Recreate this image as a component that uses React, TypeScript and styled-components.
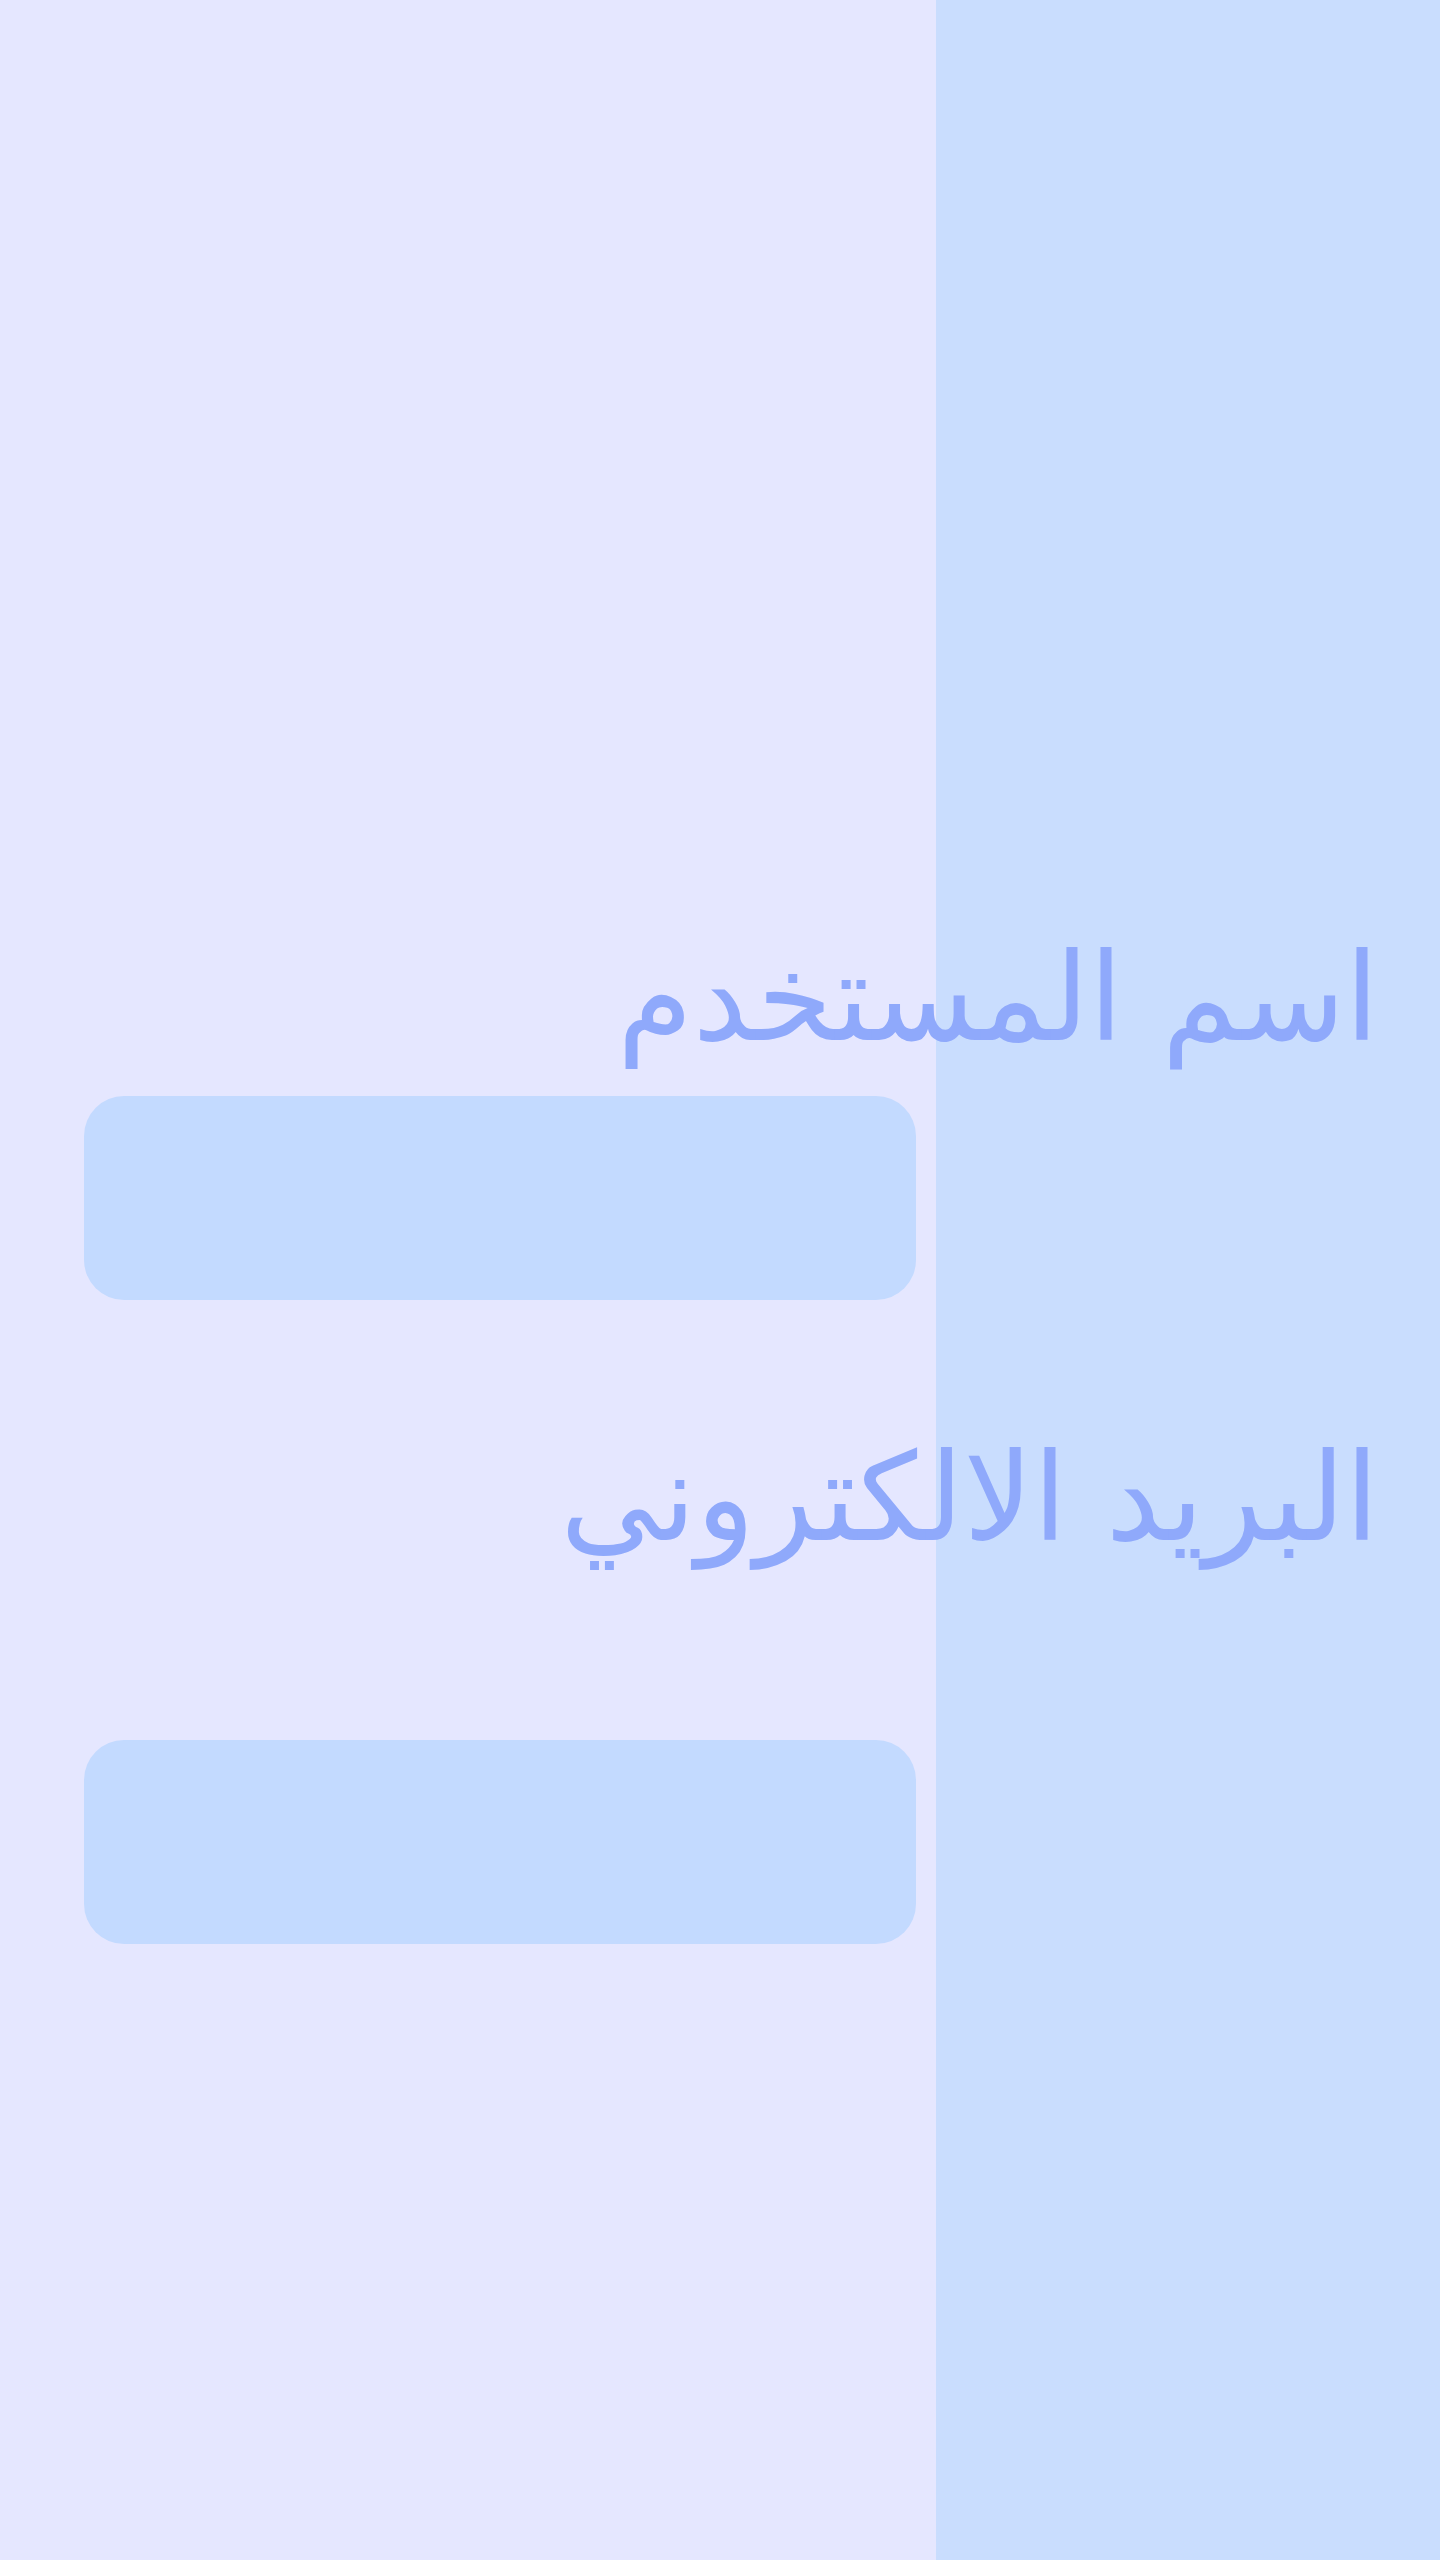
import React from "react";
import styled, { createGlobalStyle } from "styled-components";

const Global = createGlobalStyle`
  html, body { margin: 0; padding: 0; }
  body { font-family: "DejaVu Sans", serif; }
`;

const Page = styled.div`
  min-height: 2560px;
  box-sizing: border-box;
  background: linear-gradient(to right, #e5e7ff 0 936px, #c9ddfe 936px 100%);
  direction: rtl;
  padding-top: 926px;
  padding-right: 61px;
`;

const Form = styled.form`
  display: flex;
  flex-direction: column;
  align-items: stretch;
`;

const Label = styled.label<{ $gapBelow: number; $gapAbove?: number }>`
  display: block;
  font-family: "DejaVu Sans", serif;
  font-size: 122px;
  line-height: 144px;
  color: #8fa9fb;
  text-align: right;
  white-space: nowrap;
  margin-top: ${(p) => p.$gapAbove ?? 0}px;
  margin-bottom: ${(p) => p.$gapBelow}px;
`;

const Input = styled.input`
  display: block;
  width: 832px;
  height: 204px;
  box-sizing: border-box;
  margin-right: 463px;
  border: none;
  outline: none;
  border-radius: 40px;
  background: #c3daff;
  padding: 0 32px;
  font-family: "DejaVu Sans", serif;
  font-size: 48px;
  color: #4a5fc1;
`;

export default function App() {
  return (
    <>
      <Global />
      <Page>
        <Form>
          <Label htmlFor="username" $gapBelow={26}>اسم المستخدم</Label>
          <Input id="username" type="text" />
          <Label htmlFor="email" $gapAbove={126} $gapBelow={170}>البريد الالكتروني</Label>
          <Input id="email" type="email" />
        </Form>
      </Page>
    </>
  );
}
